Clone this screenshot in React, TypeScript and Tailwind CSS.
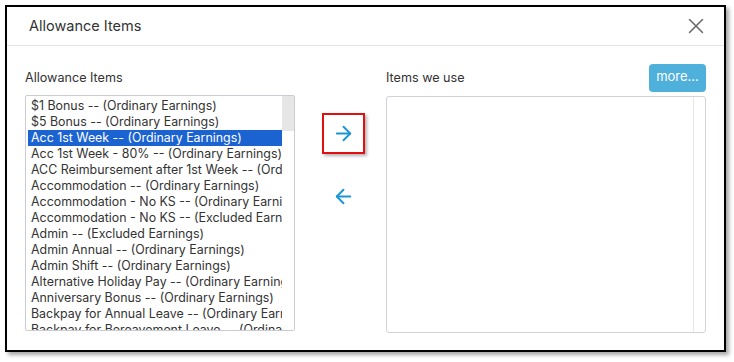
import React from "react";
import { ArrowRight, ArrowLeft, X } from "lucide-react";

const items = [
  "$1 Bonus -- (Ordinary Earnings)",
  "$5 Bonus -- (Ordinary Earnings)",
  "Acc 1st Week -- (Ordinary Earnings)",
  "Acc 1st Week - 80% -- (Ordinary Earnings)",
  "ACC Reimbursement after 1st Week -- (Ordinary Earnings)",
  "Accommodation -- (Ordinary Earnings)",
  "Accommodation - No KS -- (Ordinary Earnings)",
  "Accommodation - No KS -- (Excluded Earnings)",
  "Admin -- (Excluded Earnings)",
  "Admin Annual -- (Ordinary Earnings)",
  "Admin Shift -- (Ordinary Earnings)",
  "Alternative Holiday Pay -- (Ordinary Earnings)",
  "Anniversary Bonus -- (Ordinary Earnings)",
  "Backpay for Annual Leave -- (Ordinary Earnings)",
  "Backpay for Bereavement Leave -- (Ordinary Earnings)",
];

export default function App() {
  return (
    <div
      className="w-[734px] h-[362px] bg-white pt-[5px] pl-[5px] text-[#333]"
      style={{ fontFamily: "Inter, 'Liberation Sans', sans-serif" }}
    >
      <div className="w-[721px] h-[347px] border-2 border-black bg-white shadow-[3px_3px_4px_rgba(0,0,0,0.35)] flex flex-col">
        <div className="h-[39px] border-b border-[#e3e3e3] flex items-center justify-between pl-[22px] pr-[15px] shrink-0">
          <span className="text-[14.5px] leading-[18px] text-[#333]">Allowance Items</span>
          <X size={26} strokeWidth={1.4} color="#6b6b6b" />
        </div>
        <div className="flex pl-[18px] pt-[18px]">
          {/* left column */}
          <div className="w-[270px] flex flex-col">
            <div className="h-[28px] flex items-center text-[12.6px] leading-[16px]">Allowance Items</div>
            <div className="mt-[3px] h-[236px] border border-[#c9ccd3] rounded-[2px] flex overflow-hidden">
              <div className="flex-1 overflow-hidden pt-[2px] pl-[2px]">
                {items.map((t, i) => (
                  <div
                    key={t}
                    className={
                      "h-[16px] leading-[16px] text-[12.4px] whitespace-nowrap overflow-hidden pl-[3px] " +
                      (i === 2 ? "bg-[#1c63d2] text-white" : "text-[#333]")
                    }
                  >
                    {t}
                  </div>
                ))}
              </div>
              <div className="w-[12px] shrink-0 bg-white">
                <div className="h-[35px] bg-[#e6e6e6]" />
              </div>
            </div>
          </div>
          {/* middle column */}
          <div className="w-[91px] flex flex-col pl-[27px] pt-[49px]">
            <div className="w-[43px] h-[41px] border-2 border-[#e01010] shadow-[2px_2px_3px_rgba(0,0,0,0.3)] flex items-center justify-center">
              <ArrowRight size={23} strokeWidth={2} color="#1b95d6" />
            </div>
            <div className="w-[43px] h-[41px] mt-[22px] flex items-center justify-center">
              <ArrowLeft size={23} strokeWidth={2} color="#1b95d6" />
            </div>
          </div>
          {/* right column */}
          <div className="w-[320px] flex flex-col">
            <div className="h-[28px] flex items-center justify-between">
              <span className="text-[12.6px] leading-[16px]">Items we use</span>
              <div className="w-[57px] h-[28px] bg-[#4fb0dc] rounded-[4px] text-white text-[13px] flex items-center justify-center pb-[3px]">
                more...
              </div>
            </div>
            <div className="mt-[4px] h-[237px] border border-[#d0d3d9] rounded-[3px] flex">
              <div className="flex-1" />
              <div className="w-[12px] border-l border-[#e6e6e6]" />
            </div>
          </div>
        </div>
      </div>
    </div>
  );
}
